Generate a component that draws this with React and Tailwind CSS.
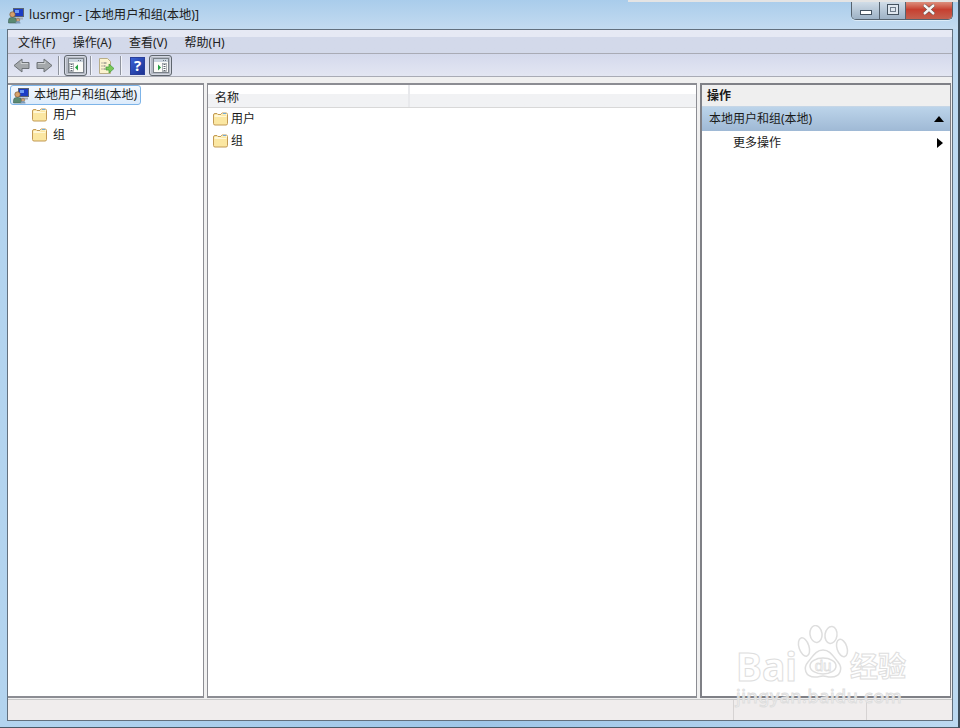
import { useMemo } from 'react';

const font = { fontFamily: '"Noto Sans", "Noto Sans CJK SC", sans-serif' };

function Folder() {
  return (
    <svg width="15" height="14" viewBox="0 0 15 14" className="shrink-0">
      <path d="M0.5 3 a1.5 1.5 0 0 1 1.5 -1.5 h2 l1 1 h3 l1 -1.5 h4 a1.5 1.5 0 0 1 1.5 1.5 v9 a1.5 1.5 0 0 1 -1.5 1.5 h-11 a1.5 1.5 0 0 1 -1.5 -1.5 z" fill="#fbe7a2" stroke="#c29a55" />
      <path d="M1.5 3.5 h6 l2 -1.5 h4 v1.5 M1.5 4.5 h12" fill="none" stroke="#fff8dc" strokeWidth="0.9" />
      <rect x="10" y="1" width="3" height="1" fill="#6ea9d8" />
    </svg>
  );
}

function ComputerUsers() {
  return (
    <svg width="17" height="17" viewBox="0 0 17 17" className="shrink-0">
      <rect x="5.5" y="1.5" width="10" height="8" fill="#1b3dc4" stroke="#5a6472" />
      <rect x="7" y="3" width="4" height="3" fill="#6d9bf2" />
      <rect x="7" y="10.5" width="8" height="2" fill="#a5adb8" />
      <circle cx="4.5" cy="7.5" r="2.7" fill="#d6a06a" stroke="#6e5030" strokeWidth="0.6" />
      <path d="M0.5 16 v-2.5 a3 3 0 0 1 3 -3 h2 a3 3 0 0 1 3 3 v2.5 z" fill="#5b8a72" stroke="#3e5f58" strokeWidth="0.6" />
      <circle cx="10" cy="13" r="1.8" fill="#c9a27a" stroke="#6e5030" strokeWidth="0.4" />
      <path d="M7.5 16.5 a2.5 2.5 0 0 1 5 0 z" fill="#7f9bb8" />
    </svg>
  );
}

function ArrowIcon({ right }) {
  return (
    <svg width="17" height="15" viewBox="0 0 17 15" className="shrink-0">
      <path
        d={right ? 'M1 4.5 h7 v-3.5 l8 6.5 l-8 6.5 v-3.5 h-7 z' : 'M16 4.5 h-7 v-3.5 l-8 6.5 l8 6.5 v-3.5 h7 z'}
        fill="#a4a8ab"
        stroke="#6d7276"
      />
      <path d={right ? 'M2 5.5 h7 v-2.5' : 'M15 5.5 h-7 v-2.5'} fill="none" stroke="#cfd2d4" />
    </svg>
  );
}

function PaneIcon({ right }) {
  const listX = right ? 10 : 2;
  const lines = useMemo(() => [6.5, 8.5, 10.5, 12.5], []);
  return (
    <svg width="16" height="15" viewBox="0 0 16 15">
      <rect x="0.5" y="0.5" width="15" height="14" fill="#fbfbf8" stroke="#7a8188" />
      <rect x="1" y="1" width="14" height="3" fill="#c9d3de" />
      <path d="M10 2.5 h1 M12 2.5 h1" stroke="#68717a" />
      <rect x={listX - 0.5} y="5.5" width="4" height="8" fill="#fff" stroke="#8b929a" strokeWidth="0.7" />
      {lines.map((y) => (
        <path key={y} d={`M${listX + 0.5} ${y} h2`} stroke="#5e666e" />
      ))}
      <path d={right ? 'M5 6.5 l3 3 l-3 3 z' : 'M10 6.5 l-3 3 l3 3 z'} fill="#23a03f" />
    </svg>
  );
}

function ToolButton({ right }) {
  return (
    <div className="flex h-[21px] w-[23px] shrink-0 items-center justify-center rounded-[3px] border border-[#5f666e] bg-[#b4b9c4] shadow-[inset_0_0_0_1px_#d3d7e1]">
      <PaneIcon right={right} />
    </div>
  );
}

function Divider({ className = '' }) {
  return <div className={`h-[19px] w-px shrink-0 bg-[#8f949e] shadow-[1px_0_0_#f2f4fa] ${className}`} />;
}

function WindowControls() {
  return (
    <div className="flex h-[20px] items-stretch self-start overflow-hidden rounded-b-[5px] border border-t-0 border-[#56636f] shadow-[0_1px_0_#dcebf7]">
      <div className="flex w-[28px] items-end justify-center border-r border-[#56636f] bg-gradient-to-b from-[#d7e2ec] via-[#b9c9d8] to-[#9db1c5] pb-[4px]">
        <div className="h-[5px] w-[12px] border border-[#44525f] bg-white" />
      </div>
      <div className="flex w-[26px] items-center justify-center border-r border-[#56636f] bg-gradient-to-b from-[#d7e2ec] via-[#b9c9d8] to-[#9db1c5]">
        <div className="h-[11px] w-[12px] border border-[#44525f] bg-[#dfe7ef] p-[2px]">
          <div className="h-full w-full border border-[#6f7c8a]" />
        </div>
      </div>
      <div className="flex w-[46px] items-center justify-center bg-gradient-to-b from-[#e0a090] via-[#c63f30] to-[#c4604f]">
        <svg width="14" height="11" viewBox="0 0 14 11">
          <path d="M2 1 L12 10 M12 1 L2 10" stroke="#5a4a48" strokeWidth="3.6" />
          <path d="M2 1 L12 10 M12 1 L2 10" stroke="#f6f6f6" strokeWidth="2.4" />
        </svg>
      </div>
    </div>
  );
}

function Watermark() {
  const outline = 'text-white/70 [-webkit-text-stroke:1px_#dedede] whitespace-nowrap';
  return (
    <div className="pointer-events-none absolute top-[625px] left-[736px] flex w-[172px] flex-col items-start">
      <div className="flex items-end">
        <span className={`h-[31px] text-[39px] leading-[31px] font-bold ${outline}`}>Bai</span>
        <svg width="52" height="58" viewBox="0 0 50 58" className="mb-[-2px] shrink-0">
          <g fill="#fff" stroke="#dedede" strokeWidth="1.5">
            <ellipse cx="6" cy="22" rx="5" ry="9.5" transform="rotate(-18 6 22)" />
            <ellipse cx="18" cy="9" rx="6" ry="8.5" transform="rotate(-8 18 9)" />
            <ellipse cx="33" cy="10" rx="6" ry="8.5" transform="rotate(8 33 10)" />
            <ellipse cx="44" cy="23" rx="5" ry="9" transform="rotate(-18 44 23)" />
            <path d="M25 25 c7 0 10 6 15 12 c5 6 3 15 -7 15 c-4 0 -5 -1 -8 -1 c-3 0 -4 1 -8 1 c-10 0 -12 -9 -7 -15 c5 -6 8 -12 15 -12 z" />
            <ellipse cx="25" cy="41" rx="13" ry="8" />
          </g>
          <text x="25" y="46" textAnchor="middle" fontSize="15" fill="#fff" stroke="#dedede" strokeWidth="0.8" fontFamily="Liberation Sans">du</text>
        </svg>
        <span className={`ml-[1px] h-[30px] text-[28px] leading-[30px] font-bold ${outline}`}>经验</span>
      </div>
      <div className={`mt-[5px] h-[20px] text-[18px] leading-[20px] tracking-[0.6px] ${outline}`}>jingyan.baidu.com</div>
    </div>
  );
}

export default function App() {
  return (
    <div
      style={font}
      className="relative flex h-[728px] w-[960px] flex-col overflow-hidden bg-gradient-to-r from-[#b3d4ef] via-[#a9cdec] to-[#bcd9f1] text-[12px] leading-[16px] text-[#1a1a1a]"
    >
      <div className="flex h-[29px] shrink-0 items-start bg-gradient-to-b from-[#a9cceb] to-[#c3dbf0] pr-[7px] pl-[8px]">
        <div className="mt-[7px]"><ComputerUsers /></div>
        <div className="mt-[6px] ml-[4px] text-[12.3px] leading-[18px] text-[#202020]">lusrmgr - [本地用户和组(本地)]</div>
        <div className="ml-auto"><WindowControls /></div>
      </div>

      <div className="mx-[7px] flex min-h-0 flex-1 flex-col border border-[#62707e] bg-[#f0f0f0]">
        <div className="flex h-[23px] shrink-0 items-center gap-[17.3px] bg-gradient-to-b from-[#e6e9f4] from-30% to-[#d3d9ea] to-30% pt-[2px] pl-[10px] text-[#202020]">
          <span>文件(F)</span>
          <span>操作(A)</span>
          <span>查看(V)</span>
          <span>帮助(H)</span>
        </div>
        <div className="flex h-[24px] shrink-0 items-center border-y border-[#a9abb5] bg-gradient-to-b from-[#d4d9ec] to-[#e3e6f2] pt-[1px] pl-[5px]">
          <ArrowIcon />
          <div className="ml-[6px]"><ArrowIcon right /></div>
          <Divider className="mx-[5px]" />
          <ToolButton />
          <Divider className="mr-[7px] ml-[3px]" />
          <svg width="16" height="16" viewBox="0 0 16 16" className="shrink-0">
            <path d="M1.5 0.5 h8 l3 3 v12 h-11 z" fill="#fbf3cf" stroke="#b9ae88" />
            <path d="M3.5 5 h1 M5.5 5 h3 M3.5 8 h1 M5.5 8 h2 M3.5 11 h1 M5.5 11 h2" stroke="#6f6f6f" />
            <path d="M8 9 h3 v-3 l5 4.5 l-5 4.5 v-3 h-3 z" fill="#7ac858" stroke="#3e9a3a" strokeWidth="0.7" />
          </svg>
          <Divider className="mx-[6px]" />
          <div className="ml-[3px] flex h-[18px] w-[15px] shrink-0 items-center justify-center border border-[#2a3f9a] bg-gradient-to-br from-[#3a62d6] to-[#1c3192] text-[15px] leading-none font-bold text-white">?</div>
          <div className="w-[4px] shrink-0" />
          <ToolButton right />
        </div>

        <div className="flex min-h-0 flex-1 gap-[3px] bg-[#f0f0f0] pt-[6px] pb-px">
          <div className="w-[196px] shrink-0 border-t-2 border-r border-b-2 border-[#8c8d93] bg-white pl-[2px]">
            <div className="flex h-[20px] w-[131px] items-center rounded-[3px] border border-[#7db4e8] bg-gradient-to-b from-[#f3f8fd] to-[#dcebfb] pl-[2px]">
              <ComputerUsers />
              <span className="ml-[4px]">本地用户和组(本地)</span>
            </div>
            <div className="mt-[1px] flex h-[17px] items-center pl-[22px]"><Folder /><span className="ml-[6px]">用户</span></div>
            <div className="mt-[3px] flex h-[17px] items-center pl-[22px]"><Folder /><span className="ml-[6px]">组</span></div>
          </div>

          <div className="w-[490px] shrink-0 border-x border-t-2 border-b-2 border-[#8c8d93] bg-white">
            <div className="flex h-[23px] border-b border-[#d8d8d8] bg-gradient-to-b from-white from-40% to-[#f1f2f4] to-40%">
              <div className="flex w-[202px] items-center border-r-2 border-[#e8e9ec] pt-[3px] pl-[7px]">名称</div>
            </div>
            <div className="flex h-[21px] items-center pl-[5px]"><Folder /><span className="ml-[3px]">用户</span></div>
            <div className="mt-px flex h-[21px] items-center pl-[5px]"><Folder /><span className="ml-[3px]">组</span></div>
          </div>

          <div className="mr-[1px] flex-1 border-t-2 border-r border-b-2 border-l-2 border-[#7f8086] bg-white">
            <div className="flex h-[21px] items-center bg-[#efefef] pl-[5px] font-bold">操作</div>
            <div className="flex h-[25px] items-center justify-between border-t border-[#c6d6e6] bg-gradient-to-b from-[#bcd4ea] to-[#9fb9d5] px-[6px] pl-[7px]">
              <span>本地用户和组(本地)</span>
              <svg width="10" height="6" viewBox="0 0 10 6"><path d="M5 0 L10 6 H0 Z" fill="#000" /></svg>
            </div>
            <div className="flex h-[24px] items-center justify-between pr-[7px] pl-[31px]">
              <span>更多操作</span>
              <svg width="6" height="10" viewBox="0 0 6 10"><path d="M0 0 L6 5 L0 10 Z" fill="#000" /></svg>
            </div>
          </div>
        </div>

        <div className="flex h-[21px] shrink-0 items-stretch border-t border-[#c8c8c8] bg-[#f0eded]">
          <div className="flex-1" />
          <div className="w-[133px] border-l border-[#d6d3d3]" />
          <div className="w-[86px] border-l border-[#d6d3d3]" />
        </div>
      </div>
      <div className="h-[7px] shrink-0 bg-gradient-to-r from-[#b3d4ef] via-[#9fc6e8] to-[#bcd9f1] shadow-[inset_0_-1px_0_#4b5a68]" />

      <div className="pointer-events-none absolute top-0 right-0 h-[2px] w-[332px] bg-[#e4e4e4]" />
      <div className="pointer-events-none absolute top-0 right-0 h-full w-[2px] bg-[#3f4f5d]" />
      <Watermark />
    </div>
  );
}
